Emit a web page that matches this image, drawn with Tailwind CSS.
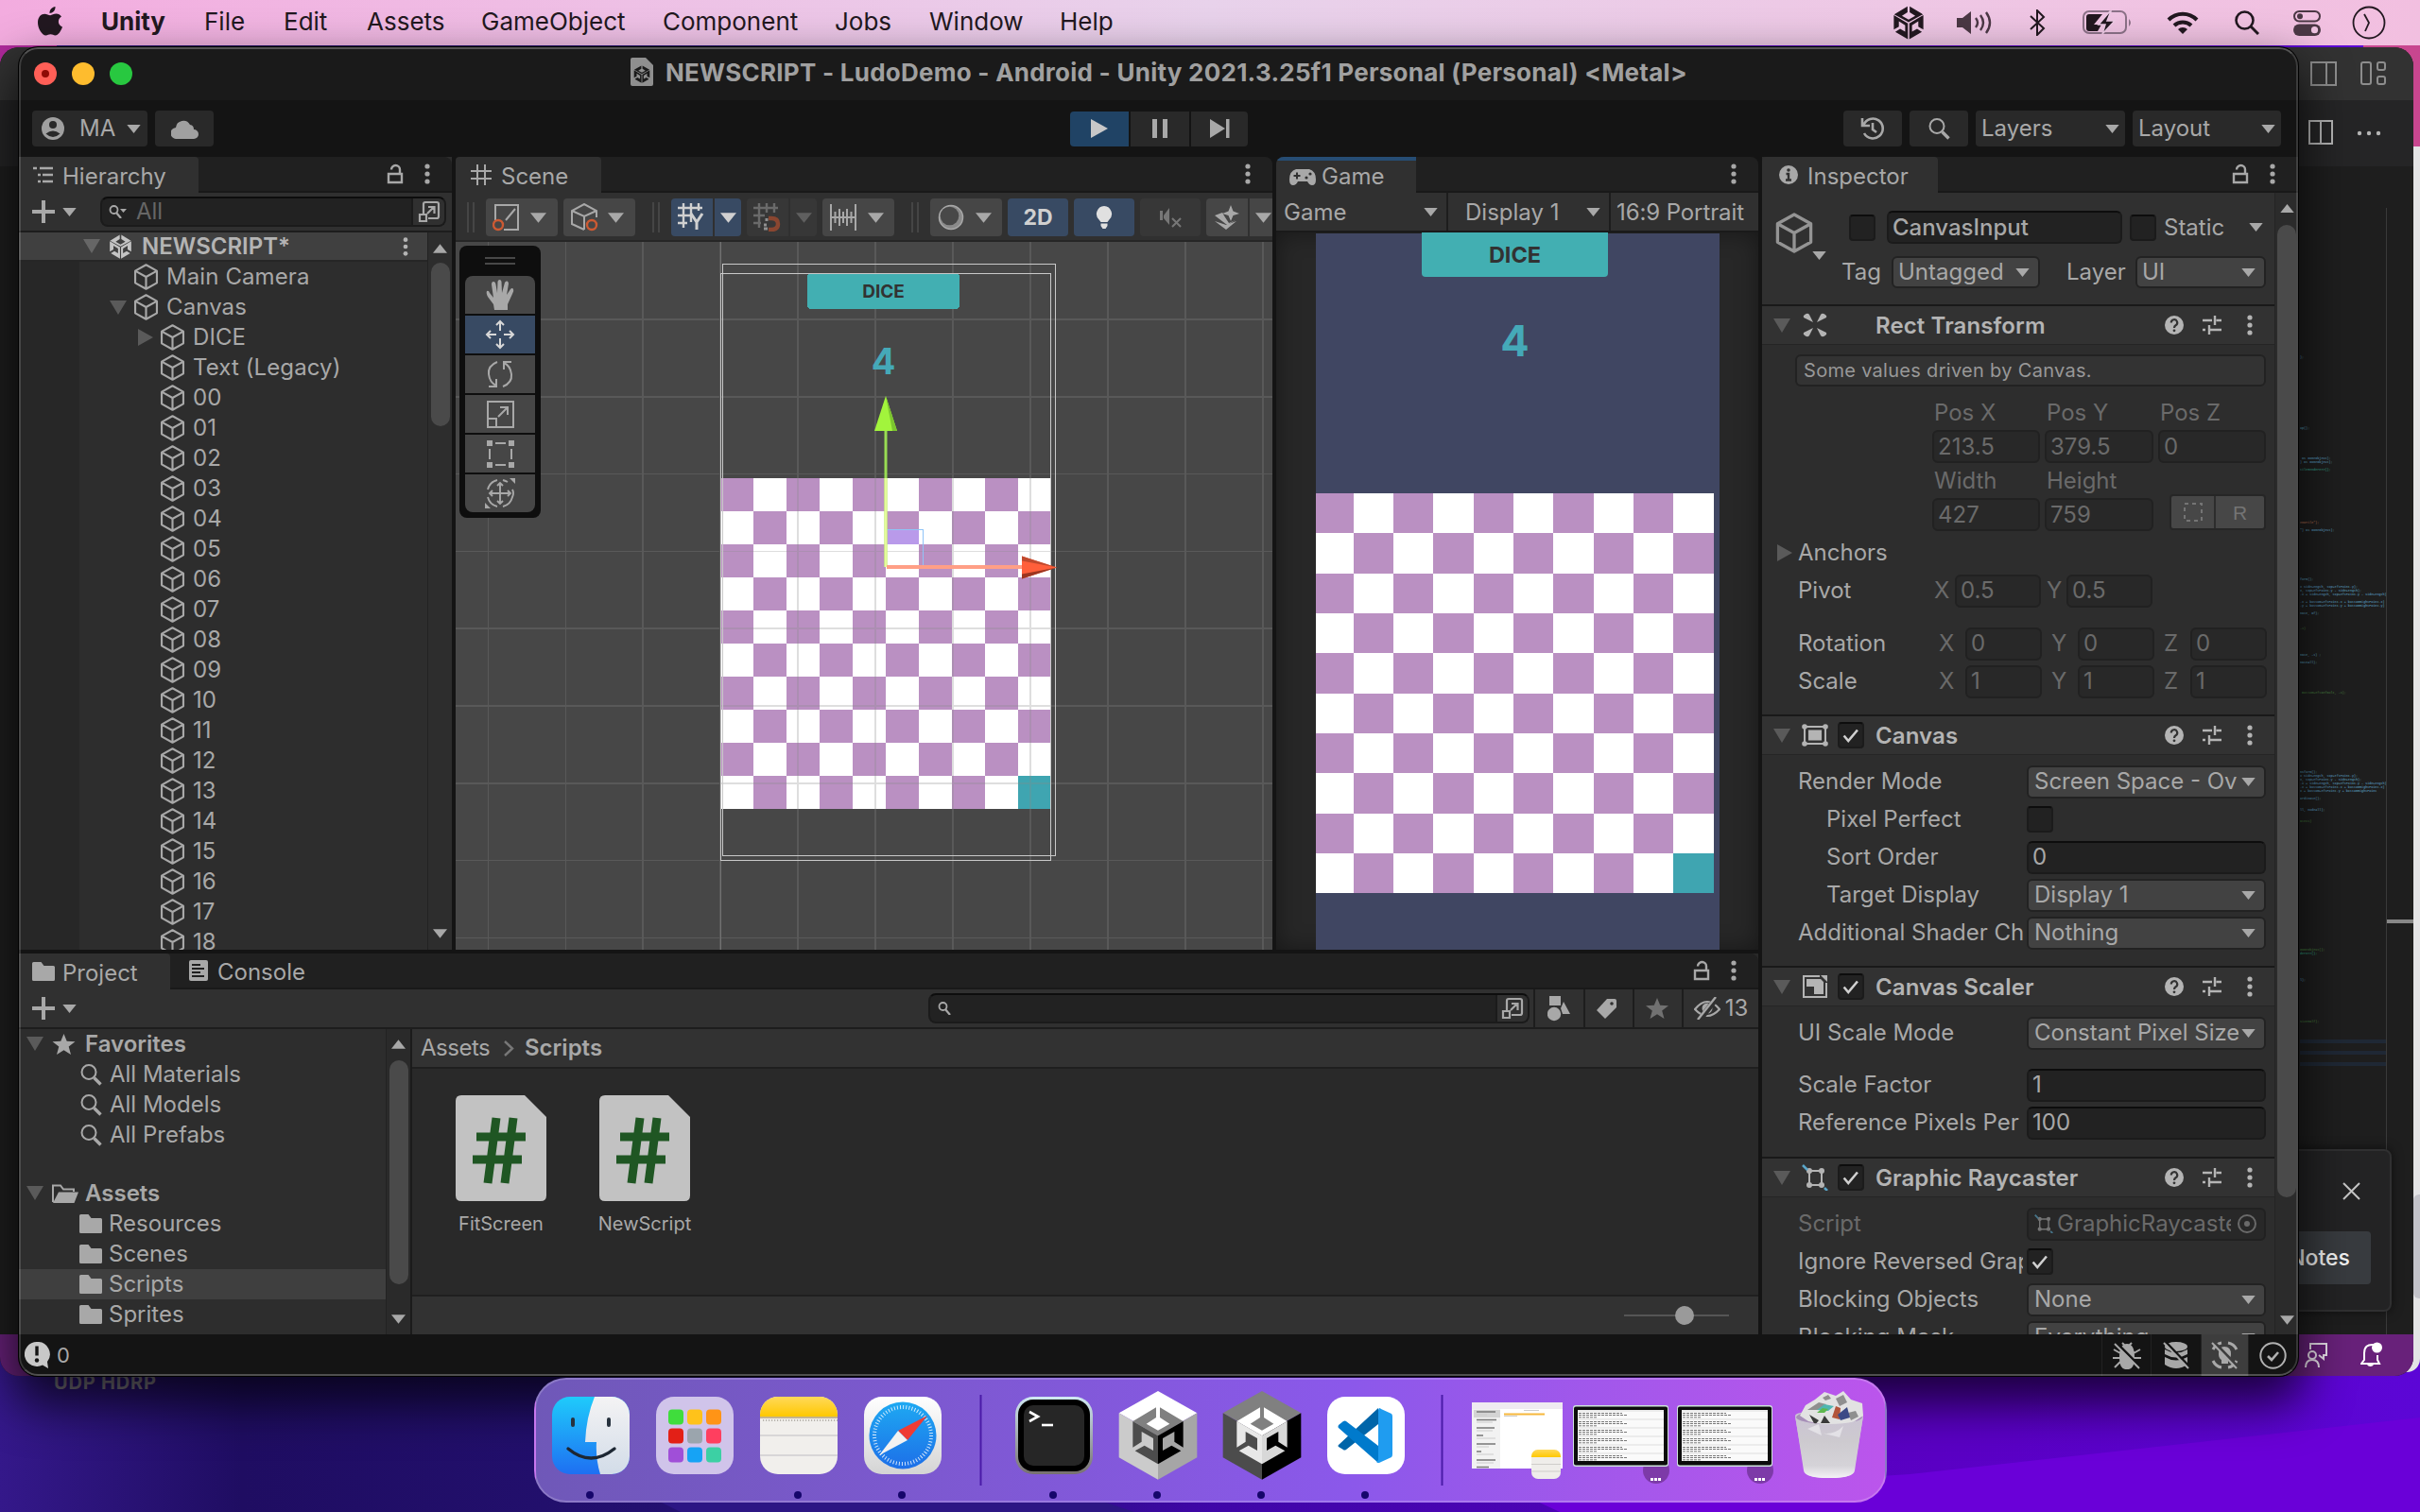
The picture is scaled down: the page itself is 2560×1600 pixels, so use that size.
<!DOCTYPE html>
<html lang="en">
<head>
<meta charset="utf-8">
<title>Unity Editor</title>
<script src="https://cdn.jsdelivr.net/npm/@tailwindcss/browser@4"></script>
</head>
<body class="w-[2560px] h-[1600px] overflow-hidden relative font-['Inter',sans-serif] text-[24px] leading-none text-[#a8a8a8] bg-[#24106b] whitespace-nowrap">

<!-- icon library -->
<svg class="hidden">
  <symbol id="cube" viewBox="2 1 20 22"><path d="M12 2l9 5v10l-9 5-9-5V7zM3 7l9 5 9-5M12 12v10" fill="none" stroke="currentColor" stroke-width="1.7" stroke-linejoin="round"/></symbol>
  <symbol id="down" viewBox="0 0 16 10"><path d="M0 0h16L8 10z" fill="currentColor"/></symbol>
  <symbol id="up" viewBox="0 0 16 10"><path d="M0 10h16L8 0z" fill="currentColor"/></symbol>
  <symbol id="fold" viewBox="0 0 18 15"><path d="M0 0h18L9 15z" fill="currentColor"/></symbol>
  <symbol id="right" viewBox="0 0 16 18"><path d="M0 0v18l16-9z" fill="currentColor"/></symbol>
  <symbol id="kebab" viewBox="0 0 6 22"><g fill="currentColor"><circle cx="3" cy="3" r="2.6"/><circle cx="3" cy="11" r="2.6"/><circle cx="3" cy="19" r="2.6"/></g></symbol>
  <symbol id="lock" viewBox="0 0 18 22"><path d="M2 11h14v9H2zM5 6.500a4.500 4.500 0 0 1 9 0V11" fill="none" stroke="currentColor" stroke-width="2.400"/></symbol>
  <symbol id="plus" viewBox="0 0 24 24"><path d="M12 0v24M0 12h24" stroke="currentColor" stroke-width="4"/></symbol>
  <symbol id="popout" viewBox="0 0 24 24"><path d="M6 14V4a2 2 0 0 1 2-2h12a2 2 0 0 1 2 2v13a2 2 0 0 1-2 2h-9M2 15h7v7H2zM10 14l7-7M11 7h6.500v7" fill="none" stroke="currentColor" stroke-width="2.200"/></symbol>
  <symbol id="search" viewBox="0 0 24 24"><path d="M10 2a7.500 7.500 0 1 1 0 15 7.500 7.500 0 0 1 0-15z" fill="none" stroke="currentColor" stroke-width="2"/><path d="M15.500 15.500l7 7" stroke="currentColor" stroke-width="3.400"/></symbol>
  <symbol id="folder" viewBox="0 0 24 20"><path d="M0 1.500Q0 0 1.500 0h8l3 4H22.500Q24 4 24 5.500v13Q24 20 22.500 20h-21Q0 20 0 18.500z" fill="currentColor"/></symbol>
  <symbol id="folderopen" viewBox="0 0 28 20"><path d="M1 19V1.500h8l3 4h11V8" fill="none" stroke="currentColor" stroke-width="2"/><path d="M1 20L7 8.500h21L23.500 20z" fill="currentColor"/></symbol>
  <symbol id="star" viewBox="0 0 24 22"><path d="M12 0l3.200 7.800 8.800.5-6.800 5.300L19.500 22 12 17.300 4.500 22l2.300-8.400L0 8.300l8.800-.5z" fill="currentColor"/></symbol>
  <symbol id="cubelogo" viewBox="-84 -92 168 188"><g fill="currentColor"><path d="M-6-88L-80-44 0 0 80-44 6-88v32l31 20L0-15-37-36-6-56z"/><path d="M-82-40L-4 6v88l-70-41 27-17 28 16V16L-54-6v30l-28 16z"/><path d="M82-40L4 6v88l70-41-27-17-28 16V16L54-6v30l28 16z"/></g></symbol>
  <symbol id="hub" viewBox="-126 -142 252 284"><path d="M0-140L124-70 0 0-124-70z" fill="var(--t)"/><path d="M-124-70L0 0v141l-124-70z" fill="var(--l)"/><path d="M124-70L0 0v141l124-70z" fill="var(--r)"/>
    <path d="M-6-88L-80-44 0 2 80-44 6-88v32l31 20L0-15-37-36-6-56z" fill="var(--it)"/><path d="M-80-44L0 2v90l-73-42 30-17 28 16V10l-37-21v32l-28 18z" fill="var(--il)"/><path d="M80-44L0 2v90l73-42-30-17-28 16V10l37-21v32l28 18z" fill="var(--ir)"/></symbol>
  <symbol id="help" viewBox="0 0 20 20"><circle cx="10" cy="10" r="10" fill="currentColor"/><path d="M6.800 7.500a3.200 3.200 0 1 1 4.800 2.700Q10 11.200 10 13" fill="none" stroke="#333" stroke-width="2.200"/><circle cx="10" cy="15.800" r="1.400" fill="#333"/></symbol>
  <symbol id="sliders" viewBox="0 0 20 20"><path d="M0 5h10M14.500 5H20M13 0v10M0 15h3M8 15h12M7 10v10" stroke="currentColor" stroke-width="2.400" fill="none"/></symbol>
  <symbol id="check" viewBox="0 0 26 26"><path d="M5 13.500l5 6L20.500 7" fill="none" stroke="#d0d0d0" stroke-width="2.800"/></symbol>
  <symbol id="rayicon" viewBox="0 0 28 28" overflow="visible"><path d="M8 7h13v15H8z" fill="none" stroke="currentColor" stroke-width="2"/><g fill="currentColor"><circle cx="8" cy="7" r="3"/><circle cx="21" cy="7" r="3"/><circle cx="8" cy="22" r="3"/><circle cx="21" cy="22" r="3"/></g><path d="M1 1l5 5M24 25l3 3" stroke="#5aa5c8" stroke-width="2.600"/></symbol>
</svg>

<!-- desktop wallpaper -->
<svg class="absolute inset-0" width="2560" height="1600" viewBox="0 0 2560 1600">
  <defs>
    <linearGradient id="wall" x1="0" x2="1"><stop offset="0" stop-color="#34188a"/><stop offset=".1" stop-color="#1f0d62"/><stop offset=".4" stop-color="#26127a"/><stop offset=".5" stop-color="#3f06a8"/><stop offset=".8" stop-color="#5a00c4"/><stop offset="1" stop-color="#5c06d6"/></linearGradient>
  </defs>
  <rect width="2560" height="1600" fill="url(#wall)"/>
  <path d="M700 1590l20 10h480l-30-10z" fill="#2c1684"/>
  <path d="M1650 1600l-30-14 400-26 540-60v100z" fill="#6a00d8"/>
  <rect width="60" height="100" fill="#b02a9c"/><rect x="2500" width="60" height="300" fill="#c8468f"/>
</svg>

<!-- white window at the back -->
<div class="absolute left-[2300px] top-[155px] w-[260px] h-[1297px] bg-[#e3e3e5] rounded-br-[14px]">
  <div class="absolute right-0 top-[1109px] w-[7px] h-[110px] bg-[#c3c3ca] rounded-l-md"></div>
</div>

<!-- menu bar -->
<header class="relative flex items-center h-12 bg-linear-to-r from-[#f3acdf] via-[#e8d2eb] to-[#f2bfe0] text-[26px] text-[#221820]">
  <svg class="ml-10 w-[26px] h-[31px] -mt-1" viewBox="0 0 26 31"><path d="M18.500 0c.3 3.800-2.600 7-6 7C12.200 3.500 15.200.3 18.500 0zM25 10.500c-4.500 2.800-4 9 1 11-1.500 4.500-4.500 9-7.500 9-2 0-2.800-1.200-5-1.200s-3.200 1.200-5 1.200C4.500 30.500 0 23 0 17 0 11 3.500 7.800 7.300 7.800c2.300 0 4 1.400 5.900 1.400 1.800 0 3.500-1.600 6.300-1.600 2.200 0 4.200 1.100 5.500 2.900z" fill="currentColor"/></svg>
  <nav class="flex ml-[41px] -mt-[2px]">
    <span class="w-[109px] font-bold">Unity</span><span class="w-[84px]">File</span><span class="w-[88px]">Edit</span><span class="w-[121px]">Assets</span><span class="w-[192px]">GameObject</span><span class="w-[182px]">Component</span><span class="w-[100px]">Jobs</span><span class="w-[138px]">Window</span><span>Help</span>
  </nav>
  <div class="ml-auto flex items-center pr-[36px]">
    <svg class="w-8 h-9" viewBox="-84 -92 168 188"><use href="#cubelogo" x="-84" y="-92" width="168" height="188"/></svg>
    <svg class="ml-[35px] w-[38px] h-[26px]" viewBox="0 0 38 26"><path d="M0 8h6l9-7v24l-9-7H0z" fill="#4b3845"/><path d="M20 8q4 5 0 10M25 5q6 8 0 16M31 2q8 11 0 22" fill="none" stroke="#4b3845" stroke-width="2.400"/></svg>
    <svg class="ml-[39px] w-[17px] h-7" viewBox="0 0 17 28"><path d="M1 7l14 13-7 7V1l7 7L1 21" fill="none" stroke="currentColor" stroke-width="2"/></svg>
    <svg class="ml-[39px] w-[52px] h-[26px]" viewBox="0 0 52 26"><rect x="1" y="1" width="45" height="23" rx="6" fill="none" stroke="#8c7288" stroke-width="2"/><path d="M49 9q4 4 0 8z" fill="#8c7288"/><path d="M7 4h14l-9 11h8l-4 7H7q-3 0-3-3V7q0-3 3-3z" fill="currentColor"/><path d="M29 1L17 15h7l-3 10 13-14h-8l4-10z" fill="currentColor" stroke="#eecbe6" stroke-width="1.500"/></svg>
    <svg class="ml-[37px] w-[34px] h-6" viewBox="0 0 34 24"><path d="M2 9a21 21 0 0 1 30 0M8 15a13 13 0 0 1 18 0" fill="none" stroke="currentColor" stroke-width="4"/><path d="M17 24l-5-5a7 7 0 0 1 10 0z" fill="currentColor"/></svg>
    <svg class="ml-[38px] w-[26px] h-[26px]" viewBox="0 0 26 26"><circle cx="10.500" cy="10.500" r="9" fill="none" stroke="currentColor" stroke-width="2.600"/><path d="M17 17l8 8" stroke="currentColor" stroke-width="3"/></svg>
    <svg class="ml-[36px] w-[29px] h-[27px]" viewBox="0 0 29 27"><rect x="1" y="1" width="27" height="10.500" rx="5.200" fill="none" stroke="#4b3845" stroke-width="2"/><circle cx="7" cy="6.200" r="3" fill="#4b3845"/><rect y="14.500" width="29" height="12.500" rx="6.200" fill="#4b3845"/><circle cx="22.500" cy="20.700" r="3.600" fill="#efc4e2"/></svg>
    <svg class="ml-[33px] w-9 h-9" viewBox="0 0 36 36"><circle cx="18" cy="18" r="16.500" fill="none" stroke="currentColor" stroke-width="1.800"/><path d="M13 9l5 9-4 9" fill="none" stroke="currentColor" stroke-width="1.800"/></svg>
  </div>
</header>

<p class="absolute left-[57px] top-[1453px] text-[20px] font-bold text-[#8a8490] tracking-[0.8px]">UDP HDRP</p>

<!-- code editor window -->
<section class="absolute left-0 top-[50px] w-[2553px] h-[1406px] rounded-[20px] overflow-hidden bg-[#1e1e1e] flex flex-col text-[#c5c5c5]">
  <div class="h-14 bg-[#323232] flex items-center justify-end pr-[28px] gap-[24px] text-[#8d8d8d]">
    <svg class="w-[30px] h-[28px]" viewBox="0 0 30 28"><path d="M2 2h26v24H2zM18 2v24" fill="none" stroke="currentColor" stroke-width="2"/></svg>
    <svg class="w-[28px] h-[26px]" viewBox="0 0 28 26"><g fill="none" stroke="currentColor" stroke-width="2"><rect x="1" y="1" width="10" height="23" rx="2"/><rect x="18" y="1" width="8" height="8" rx="2"/><rect x="18" y="16" width="8" height="8" rx="2"/></g></svg>
  </div>
  <div class="h-[70px] bg-[#252526] flex items-center justify-end pr-[34px] gap-[25px] text-[#b5b5b5]">
    <svg class="w-[26px] h-[28px] -mt-[2px]" viewBox="0 0 26 28"><path d="M1 2h24v24H1zM13 2v24" fill="none" stroke="currentColor" stroke-width="2"/></svg>
    <svg class="w-[26px] h-[6px]" viewBox="0 0 26 6"><g fill="currentColor"><circle cx="3" cy="3" r="2.200"/><circle cx="13" cy="3" r="2.200"/><circle cx="23" cy="3" r="2.200"/></g></svg>
  </div>
  <div class="flex-1 relative flex justify-end">
    <div id="minimap" class="relative w-[91px] overflow-hidden font-['Liberation_Mono',monospace] text-[3.4px] leading-[4px]"></div>
    <div class="w-[29px] mt-11 border-l border-[#3a3a3a]"><div class="mt-[753px] h-1 bg-[#878787]"></div></div>
    <div class="absolute right-[23px] top-[1040px] w-[200px] h-[172px] rounded-lg border-2 border-[#303031] bg-[#232324] shadow-[0_0_12px_#0008] flex flex-col items-end">
      <svg class="w-[19px] h-[19px] mr-[31px] mt-[33px]" viewBox="0 0 19 19"><path d="M1 1l17 17M18 1L1 18" stroke="#c5c5c5" stroke-width="2"/></svg>
      <div class="w-[170px] h-14 mt-[33px] mr-5 rounded bg-[#383b3f] text-[#f2f2f2] font-medium text-[23px] flex items-center justify-end pr-[22px]">Notes</div>
    </div>
  </div>
  <div class="h-11 bg-[#68217a] flex items-center justify-end pr-[32px] gap-[34px] text-[#e8e0ea]">
    <svg class="w-[26px] h-[28px]" viewBox="0 0 26 28"><path d="M7 8V2h17v12h-3v4l-5-4M2 27q0-8 7-8t7 8" fill="none" stroke="currentColor" stroke-width="2"/><circle cx="9" cy="14" r="4" fill="none" stroke="currentColor" stroke-width="2"/></svg>
    <svg class="w-[24px] h-[28px]" viewBox="0 0 24 28"><path d="M14 3Q4 2 4 12v7l-3 4h19l-2-4v-5" fill="none" stroke="#fff" stroke-width="2"/><circle cx="17.500" cy="6" r="5.500" fill="#fff"/><path d="M7 24a4 4 0 0 0 7 0z" fill="#fff"/></svg>
  </div>
</section>

<!-- editor window -->
<main class="absolute left-[20px] top-[50px] w-[2411px] h-[1406px] rounded-[20px] overflow-hidden bg-[#141414] flex flex-col shadow-[0_24px_50px_6px_#000000b0,0_0_0_1px_#000]">
  <div class="absolute inset-0 rounded-[20px] border-2 border-white/25 border-x-white/15 z-50 pointer-events-none"></div>

  <!-- title bar -->
  <div class="h-14 bg-[#1a1a1a] flex items-center shrink-0">
    <div class="flex gap-4 ml-4">
      <div class="size-6 rounded-full bg-[#ff5f57] flex items-center justify-center"><div class="size-2 rounded-full bg-[#8e0b06]"></div></div>
      <div class="size-6 rounded-full bg-[#febc2e]"></div>
      <div class="size-6 rounded-full bg-[#28c840]"></div>
    </div>
    <svg class="ml-[527px] -mt-1 w-[24px] h-[30px]" viewBox="0 0 24 30"><path d="M2 0h14l8 8v20q0 2-2 2H2q-2 0-2-2V2Q0 0 2 0z" fill="#8f8f8f"/><use href="#cubelogo" x="3" y="8" width="18" height="19" color="#1a1a1a"/></svg>
    <span class="ml-[13px] -mt-[2px] text-[26px] font-bold text-[#a0a0a0] tracking-[0.25px]">NEWSCRIPT - LudoDemo - Android - Unity 2021.3.25f1 Personal (Personal) &lt;Metal&gt;</span>
  </div>

  <!-- main toolbar -->
  <div class="h-[60px] shrink-0 flex items-center">
    <div class="ml-[14px] w-[122px] h-[38px] rounded bg-[#292929] flex items-center pl-[10px]">
      <svg class="size-6" viewBox="0 0 24 24"><circle cx="12" cy="12" r="12" fill="#a0a0a0"/><circle cx="12" cy="8" r="4" fill="#292929"/><path d="M4.500 17.500q7.500-6 15 0-7.500 7-15 0z" fill="#292929"/></svg>
      <span class="ml-[16px] w-[50px]">MA</span><svg class="w-[15px] h-[9px]"><use href="#down"/></svg>
    </div>
    <div class="ml-2 w-[62px] h-[38px] rounded bg-[#292929] flex items-center justify-center"><svg class="w-[29px] h-[21px]" viewBox="0 0 29 21"><path d="M6 21a6 6 0 0 1-1-12A8 8 0 0 1 20 6a5 5 0 0 1 4 5 5 5 0 0 1 0 10z" fill="#a0a0a0"/></svg></div>
    <div class="ml-[906px] flex gap-[2px] h-[37px] text-[#a8a8a8]">
      <div class="w-[62px] rounded-l bg-[#204365] flex items-center justify-center"><svg class="w-[18px] h-[20px]" viewBox="0 0 18 20"><path d="M0 0l18 10L0 20z" fill="#c8c8c8"/></svg></div>
      <div class="w-[62px] bg-[#292929] flex items-center justify-center"><svg class="w-[18px] h-[20px]" viewBox="0 0 18 20"><path d="M1 0h5v20H1zM12 0h5v20h-5z" fill="currentColor"/></svg></div>
      <div class="w-[60px] rounded-r bg-[#292929] flex items-center justify-center"><svg class="w-[21px] h-[20px]" viewBox="0 0 21 20"><path d="M0 0l16 10L0 20zM17 0h3.500v20H17z" fill="currentColor"/></svg></div>
    </div>
    <div class="ml-auto mr-[18px] flex gap-2 h-[38px]">
      <div class="w-[62px] rounded bg-[#292929] flex items-center justify-center"><svg class="size-[26px]" viewBox="0 0 26 26"><path d="M3.500 9A10.500 10.500 0 1 1 4 18M2 2v8h8M13 7v7l4 3" fill="none" stroke="currentColor" stroke-width="2.600"/></svg></div>
      <div class="w-[62px] rounded bg-[#292929] flex items-center justify-center"><svg class="size-6"><use href="#search"/></svg></div>
      <div class="w-[158px] rounded bg-[#292929] flex items-center justify-between px-[6px]"><span>Layers</span><svg class="w-[15px] h-[9px]"><use href="#down"/></svg></div>
      <div class="w-[157px] rounded bg-[#292929] flex items-center justify-between px-[6px]"><span>Layout</span><svg class="w-[15px] h-[9px]"><use href="#down"/></svg></div>
    </div>
  </div>

  <div class="flex h-[1246px] shrink-0 gap-1">
    <div class="w-[1840px] flex flex-col gap-1">
      <div class="h-[839px] flex gap-1">

        <!-- hierarchy -->
        <section class="w-[458px] flex flex-col bg-[#2d2d2d] overflow-hidden">
          <div class="h-[38px] shrink-0 flex items-stretch bg-[#202020] rounded-tr-lg">
            <div class="w-[190px] bg-[#303030] rounded-tr flex items-center pl-[15px]">
              <svg class="w-[22px] h-[18px]" viewBox="0 0 22 18"><path d="M0 2h4M7 2h14M5 9h3M10 9h11M5 16h3M10 16h11" stroke="currentColor" stroke-width="2.400"/></svg><span class="ml-[9px] mt-[3px]">Hierarchy</span>
            </div>
            <div class="flex-1 flex items-center justify-end border-b-2 border-[#191919] pr-[23px] gap-[22px]"><svg class="w-[18px] h-[22px]"><use href="#lock"/></svg><svg class="w-[6px] h-[22px]"><use href="#kebab"/></svg></div>
          </div>
          <div class="h-[42px] shrink-0 bg-[#303030] border-b-2 border-[#1d1d1d] flex items-center pl-[14px]">
            <svg class="size-6"><use href="#plus"/></svg><svg class="ml-2 w-[15px] h-[9px]"><use href="#down"/></svg>
            <div class="ml-[25px] w-[366px] h-8 rounded-lg bg-[#222] border-2 border-[#1b1b1b] border-t-[#0d0d0d] flex items-center overflow-hidden">
              <svg class="ml-[7px] w-5 h-[14px]" viewBox="0 0 20 14"><circle cx="5.500" cy="5" r="4" fill="none" stroke="currentColor" stroke-width="1.800"/><path d="M8 8l5 6" stroke="currentColor" stroke-width="2.200"/><path d="M12 4h7l-3.500 4z" fill="currentColor"/></svg>
              <span class="ml-[9px] text-[#666]">All</span>
              <div class="ml-auto w-[35px] self-stretch bg-[#303030] border-l-2 border-[#1b1b1b] flex items-center justify-center"><svg class="size-6"><use href="#popout"/></svg></div>
            </div>
          </div>
          <div class="flex-1 flex min-h-0">
            <div class="w-[432px] relative flex flex-col overflow-hidden">
              <div class="absolute left-0 top-0 bottom-0 w-16 bg-[#272727]"></div>
              <div class="relative h-[31px] shrink-0 bg-[#404040] border-b-2 border-[#262626] flex items-center pl-[68px] font-semibold text-[#b4b4b4]">
                <svg class="w-[18px] h-[15px] text-[#666]"><use href="#fold"/></svg><svg class="ml-[9px] w-[25px] h-[26px] text-[#c4c4c4]"><use href="#cubelogo"/></svg><span class="ml-[10px]">NEWSCRIPT*</span>
                <svg class="ml-auto mr-[20px] w-[6px] h-5"><use href="#kebab"/></svg>
              </div>
              <div id="tree" class="relative flex flex-col"></div>
            </div>
            <div class="flex-1 border-l border-[#222] flex flex-col items-center pt-3 pb-3">
              <svg class="w-[15px] h-[10px] shrink-0"><use href="#up"/></svg><div class="mt-[10px] w-5 h-[173px] rounded-full bg-[#4a4a4a]"></div>
              <svg class="mt-auto w-[15px] h-[10px] shrink-0"><use href="#down"/></svg>
            </div>
          </div>
        </section>

        <!-- scene -->
        <section class="w-[864px] flex flex-col overflow-hidden">
          <div class="h-[38px] shrink-0 flex items-stretch bg-[#202020] rounded-t-lg">
            <div class="w-[154px] bg-[#303030] rounded-t flex items-center pl-4">
              <svg class="w-[22px] h-[22px]" viewBox="0 0 22 22"><path d="M7 0v22M15 0v22M0 7h22M0 15h22" stroke="currentColor" stroke-width="2"/></svg><span class="ml-[10px] mt-[3px]">Scene</span>
            </div>
            <div class="flex-1 flex items-center justify-end border-b-2 border-[#191919] pr-[23px]"><svg class="w-[6px] h-[22px]"><use href="#kebab"/></svg></div>
          </div>
          <div class="h-[52px] pt-[2px] shrink-0 bg-[#303030] border-b-2 border-[#262626] flex items-center overflow-hidden *:shrink-0 *:h-10">
            <div class="ml-3 w-2 h-8! border-x-2 border-[#454545]"></div>
            <div class="ml-3 w-[76px] rounded bg-[#464646] flex items-center pl-[7px]"><svg class="w-8 h-[30px]" viewBox="0 0 32 30"><path d="M3 18V2h24v26H12M14 18L24 6" fill="none" stroke="currentColor" stroke-width="2"/><circle cx="6" cy="23" r="5" fill="none" stroke="#cc5a33" stroke-width="2.400"/></svg><svg class="ml-2 w-[17px] h-[11px]"><use href="#down"/></svg></div>
            <div class="ml-[6px] w-[76px] rounded bg-[#464646] flex items-center pl-[7px]"><svg class="w-8 h-[30px]" viewBox="0 0 32 30"><path d="M15 28L2 22V8l13-7 13 7v7M2 8l13 6 13-6M15 14v14" fill="none" stroke="currentColor" stroke-width="2"/><circle cx="23" cy="23" r="5" fill="none" stroke="#cc5a33" stroke-width="2.400"/></svg><svg class="ml-2 w-[17px] h-[11px]"><use href="#down"/></svg></div>
            <div class="ml-[18px] w-2 h-8! border-x-2 border-[#454545]"></div>
            <div class="ml-3 w-11 rounded-l bg-[#384a63] text-[#d0d0d0] flex items-center justify-center"><svg class="w-[30px] h-[30px]" viewBox="0 0 30 30"><path d="M6 0v26M14 0v12M22 0v8M0 5h26M0 13h14M0 21h10M14 12v8" stroke="currentColor" stroke-width="2.400"/><path d="M14 11l6 9 6-9M20 19v9" fill="none" stroke="currentColor" stroke-width="3"/></svg></div>
            <div class="ml-[2px] w-7 rounded-r bg-[#384a63] text-[#d0d0d0] flex items-center justify-center"><svg class="w-[17px] h-[11px]"><use href="#down"/></svg></div>
            <div class="ml-[6px] w-11 rounded-l bg-[#373737] text-[#6a6a6a] flex items-center justify-center"><svg class="w-[30px] h-[30px]" viewBox="0 0 30 30"><path d="M6 0v26M14 0v10M22 0v10M0 5h26M0 13h12M0 21h8" stroke="currentColor" stroke-width="2.400"/><path d="M14 16v3M14 23h-3M11 27h4" stroke="#909090" stroke-width="3"/><path d="M16 16h3q7 0 7 6t-7 6h-3" fill="none" stroke="#8a4630" stroke-width="4.500"/></svg></div>
            <div class="ml-[2px] w-7 rounded-r bg-[#373737] text-[#5f5f5f] flex items-center justify-center"><svg class="w-[17px] h-[11px]"><use href="#down"/></svg></div>
            <div class="ml-[6px] w-[76px] rounded bg-[#464646] flex items-center pl-2"><svg class="w-7 h-[28px]" viewBox="0 0 28 28"><path d="M1 0v28M27 0v28M1 14h26M5.500 8v12M10 5v18M14 8v12M18 5v18M22.500 8v12" stroke="currentColor" stroke-width="2"/></svg><svg class="ml-[12px] w-[17px] h-[11px]"><use href="#down"/></svg></div>
            <div class="ml-[18px] w-2 h-8! border-x-2 border-[#454545]"></div>
            <div class="ml-3 w-[76px] rounded bg-[#464646] flex items-center pl-2"><svg class="w-7 h-[28px]" viewBox="0 0 28 28"><circle cx="14" cy="14" r="12.500" fill="#8a8a8a" stroke="currentColor" stroke-width="1.500"/><circle cx="12.500" cy="12.500" r="9.800" fill="#484848"/></svg><svg class="ml-[12px] w-[17px] h-[11px]"><use href="#down"/></svg></div>
            <div class="ml-[6px] w-16 rounded bg-[#384a63] text-[#d0d0d0] font-bold text-[23px] flex items-center justify-center">2D</div>
            <div class="ml-[6px] w-16 rounded bg-[#384a63] flex items-center justify-center"><svg class="w-[18px] h-[24px]" viewBox="0 0 18 24"><path d="M9 0a8.500 8.500 0 0 1 5 15l-1.500 2h-7L4 15A8.500 8.500 0 0 1 9 0zM5.500 18.500h7V21L10.500 24h-3l-2-3z" fill="#e0e0e0"/></svg></div>
            <div class="ml-[6px] w-16 rounded bg-[#373737] text-[#777] flex items-center justify-center"><svg class="w-6 h-6" viewBox="0 0 24 24"><path d="M1 5h3v10H1zM5 10l6-8v18l-6-7z" fill="currentColor"/><path d="M14 13l9 9M23 13l-9 9" stroke="currentColor" stroke-width="2"/></svg></div>
            <div class="ml-[6px] w-11 rounded-l bg-[#464646] flex items-center justify-center"><svg class="w-[26px] h-[26px]" viewBox="0 0 26 26"><path d="M17 0l2.500 6.500L26 9l-6.500 2L17 17l-2.500-6L8 9l6.500-2.500zM0 11l8-3 3 5 4 6 7-3-9 5zM0 17l12 4 11-4-11 9z" fill="currentColor"/></svg></div>
            <div class="ml-[2px] w-7 bg-[#464646] flex items-center pl-[6px]"><svg class="w-[17px] h-[11px] shrink-0"><use href="#down"/></svg></div>
          </div>
          <div class="relative flex-1 bg-[#474747]">
            <svg class="absolute inset-0" width="864" height="749" viewBox="482 256 864 749" shape-rendering="crispEdges">
              <g id="board"></g>
              <path id="gridlines" fill="none" stroke="#888" stroke-opacity=".28" stroke-width="1.500"/>
              <path d="M762.500 256V1005" stroke="#999" stroke-opacity=".4"/>
              <rect x="854" y="289" width="161" height="38" rx="4" fill="#42afb2"/>
              <rect x="764" y="279.500" width="352.500" height="626" fill="none" stroke="#c9c9c9" stroke-width="1"/>
              <rect x="762.500" y="289.500" width="349" height="621" fill="none" stroke="#c9c9c9" stroke-width="1"/>
              <rect x="938" y="560" width="34" height="16" fill="#b99aea"/>
              <path d="M938 560.500h38.500V598" fill="none" stroke="#8fc4f7" stroke-width="1.200"/>
              <g shape-rendering="auto">
                <path d="M937 456v144" stroke="#98dc53" stroke-width="3"/><path d="M937 506v94" stroke="#e4fb9a" stroke-width="3"/>
                <path d="M938 600h146" stroke="#ff9f86" stroke-width="4"/>
                <path d="M937 419l12 37h-24z" fill="#a2f43c"/><path d="M937 419l12 37h-5z" fill="#7cc52f"/>
                <path d="M1118 600.500l-37-12v24z" fill="#ff5f3a"/><path d="M1118 600.500l-37 12v-5z" fill="#9c3620"/><path d="M1118 600.500l-37-12v5z" fill="#c04a2e"/>
              </g>
            </svg>
            <div class="absolute left-[372px] top-[33px] w-[161px] h-[38px] flex items-center justify-center text-[19px] font-bold text-[#323232]">DICE</div>
            <div class="absolute left-[372px] top-[107px] w-[161px] text-center text-[38px] font-bold text-[#45a9b8]">4</div>
            <!-- tool palette -->
            <div class="absolute left-[4px] top-[4px] w-[86px] h-[288px] rounded-lg bg-[#0e0e0e] flex flex-col items-center gap-[2px] text-[#a8a8a8]">
              <div class="h-[30px] shrink-0 flex flex-col gap-[4px] pt-3"><div class="w-8 h-[2px] bg-[#484848]"></div><div class="w-8 h-[2px] bg-[#484848]"></div></div>
              <div class="w-[74px] h-10 rounded-t-lg bg-[#464646] flex items-center justify-center"><svg class="w-[30px] h-[32px]" viewBox="0 0 30 32"><path d="M9 32L8 26 2 18Q0 14 1 12q2-1 3 2l4 5L6 5q0-3 2-3t2.500 3L12 14l.5-12Q13 0 14.500 0T16.500 2L17 14 20 3q1-2 2.500-1.500T24 4l-2 12 4-6q2-2 3 0t-1 5l-5 11v6z" fill="currentColor"/></svg></div>
              <div class="w-[74px] h-10 bg-[#384a63] text-[#d8d8d8] flex items-center justify-center"><svg class="w-8 h-8" viewBox="0 0 32 32"><path d="M16 2v10M16 20v10M2 16h10M20 16h10M12 6l4-4 4 4M12 26l4 4 4-4M6 12l-4 4 4 4M26 12l4 4-4 4" fill="none" stroke="currentColor" stroke-width="2"/></svg></div>
              <div class="w-[74px] h-10 bg-[#464646] flex items-center justify-center"><svg class="w-[30px] h-[30px]" viewBox="0 0 30 30"><path d="M12 2Q2 6 3 15t8 12M3 28h8v-8M18 28q10-4 9-13T19 3M27 2h-8v8" fill="none" stroke="currentColor" stroke-width="2"/></svg></div>
              <div class="w-[74px] h-10 bg-[#464646] flex items-center justify-center"><svg class="w-[29px] h-[29px]" viewBox="0 0 29 29"><path d="M1 1h27v27H1zM1 19h9v9M12 17L22 7M14 7h8v8" fill="none" stroke="currentColor" stroke-width="2"/></svg></div>
              <div class="w-[74px] h-10 bg-[#464646] flex items-center justify-center"><svg class="w-[29px] h-[29px]" viewBox="0 0 29 29"><path d="M0 0h6v6H0zM23 0h6v6h-6zM0 23h6v6H0zM23 23h6v6h-6z" fill="currentColor"/><path d="M3 9v11M26 9v11M9 3h11M9 26h11" stroke="currentColor" stroke-width="2"/></svg></div>
              <div class="w-[74px] h-10 rounded-b-lg bg-[#464646] flex items-center justify-center"><svg class="w-[32px] h-[32px]" viewBox="0 0 32 32"><path d="M16 5v22M5 16h22M13 8l3-3 3 3M13 24l3 3 3-3M8 13l-3 3 3 3M24 13l3 3-3 3M3 12Q5 4 13 2M19 2q3 1 5 2M29 12q2 4 0 8Q27 28 19 30M13 30q-8-2-10-10" fill="none" stroke="currentColor" stroke-width="1.900"/><path d="M26 0h6v6zM0 26v6h6z" fill="currentColor"/></svg></div>
            </div>
          </div>
        </section>

        <!-- game -->
        <section class="w-[510px] flex flex-col overflow-hidden">
          <div class="h-[38px] shrink-0 flex items-stretch bg-[#202020] rounded-t-lg overflow-hidden">
            <div class="w-[148px] bg-[#303030] border-t-4 border-[#264d74] flex items-center pl-[14px]">
              <svg class="w-7 h-[17px]" viewBox="0 0 28 17"><path d="M7 0h14q7 2 7 11 0 6-4 6-3 0-5-4H9q-2 4-5 4-4 0-4-6Q0 2 7 0z" fill="currentColor"/><path d="M8 3.500v7M4.500 7h7" stroke="#303030" stroke-width="2"/><circle cx="18" cy="9" r="1.600" fill="#303030"/><circle cx="22" cy="5" r="1.600" fill="#303030"/></svg><span class="ml-[6px]">Game</span>
            </div>
            <div class="flex-1 flex items-center justify-end border-b-2 border-[#191919] pr-[23px]"><svg class="w-[6px] h-[22px]"><use href="#kebab"/></svg></div>
          </div>
          <div class="h-[42px] shrink-0 bg-[#303030] border-b-2 border-[#1a1a1a] flex items-stretch *:flex *:items-center">
            <div class="w-[182px] pl-2 pr-[9px] justify-between border-r-2 border-[#1d1d1d]"><span class="mt-px">Game</span><svg class="w-[15px] h-[9px]"><use href="#down"/></svg></div>
            <div class="w-[172px] pl-[18px] pr-[9px] justify-between border-r-2 border-[#1d1d1d]"><span class="mt-px">Display 1</span><svg class="w-[15px] h-[9px]"><use href="#down"/></svg></div>
            <div class="pl-[6px] pt-px tracking-[-0.1px]">16:9 Portrait</div>
          </div>
          <div class="flex-1 relative bg-[#272727]">
            <div class="absolute inset-0 shadow-[inset_0_0_24px_#0006]"></div>
            <svg class="absolute inset-0" width="510" height="759" viewBox="1350 246 510 759"><rect x="1392" y="247" width="427" height="758" fill="#404662"/><rect x="1504" y="242" width="197" height="51" rx="4" fill="#42afb2"/><g id="gboard" shape-rendering="crispEdges"></g></svg>
            <div class="absolute left-[154px] top-0 w-[197px] h-[47px] flex items-center justify-center text-[23.5px] font-bold text-[#323232]">DICE</div>
            <div class="absolute left-[154px] top-[92px] w-[197px] text-center text-[45px] font-bold text-[#45a9b8]">4</div>
          </div>
        </section>
      </div>

      <!-- project -->
      <section class="h-[403px] flex flex-col bg-[#292929]">
        <div class="h-[38px] shrink-0 flex items-stretch bg-[#202020] rounded-tr-lg">
          <div class="w-[160px] bg-[#303030] rounded-tr flex items-center pl-[14px]"><svg class="w-6 h-5"><use href="#folder"/></svg><span class="ml-2 mt-[3px]">Project</span></div>
          <div class="flex-1 flex items-center border-b-2 border-[#191919] pl-5 pr-[23px]">
            <svg class="w-5 h-[22px]" viewBox="0 0 20 22"><rect width="20" height="22" rx="2" fill="currentColor"/><path d="M3 5h9M3 9h13M3 13h9M3 17h13" stroke="#202020" stroke-width="2"/></svg><span class="ml-[10px] mt-[4px]">Console</span>
            <svg class="ml-auto mr-[22px] w-[18px] h-[22px]"><use href="#lock"/></svg><svg class="w-[6px] h-[22px]"><use href="#kebab"/></svg>
          </div>
        </div>
        <div class="h-[42px] shrink-0 bg-[#303030] border-b-2 border-[#1d1d1d] flex items-center pl-[14px]">
          <svg class="size-6"><use href="#plus"/></svg><svg class="ml-2 w-[15px] h-[9px]"><use href="#down"/></svg>
          <div class="ml-auto w-[636px] h-8 rounded-lg bg-[#222] border-2 border-[#1b1b1b] border-t-[#0d0d0d] flex items-center overflow-hidden">
            <svg class="ml-2 w-[14px] h-[14px]" viewBox="0 0 14 14"><circle cx="5.500" cy="5" r="4" fill="none" stroke="currentColor" stroke-width="1.800"/><path d="M8 8l5 6" stroke="currentColor" stroke-width="2.200"/></svg>
            <div class="ml-auto w-[34px] self-stretch bg-[#303030] border-l-2 border-[#1b1b1b] flex items-center justify-center"><svg class="size-6"><use href="#popout"/></svg></div>
          </div>
          <div class="ml-1 flex self-stretch *:flex *:items-center *:justify-center *:border-l-2 *:border-[#1d1d1d]">
            <div class="w-[53px] pr-[2px]"><svg class="w-6 h-[27px]" viewBox="0 0 24 27"><path d="M2 0h12v10H2zM17 6l7 13h-8l-2-6z" fill="currentColor"/><circle cx="7" cy="19" r="7.200" fill="currentColor"/></svg></div>
            <div class="w-[52px] pr-[6px]"><svg class="w-[21px] h-[21px]" viewBox="0 0 21 21"><path d="M11 0h8q2 0 2 2v7L9 21 0 12z" fill="currentColor"/><circle cx="16" cy="5" r="1.800" fill="#303030"/></svg></div>
            <div class="w-[52px] pr-[2px] text-[#717171]"><svg class="w-6 h-[22px]"><use href="#star"/></svg></div>
            <div class="w-[81px]"><svg class="w-7 h-6" viewBox="0 0 28 24"><path d="M1 13Q14-3 27 13 14 27 1 13z" fill="none" stroke="currentColor" stroke-width="2.200"/><circle cx="14" cy="12" r="5.500" fill="currentColor"/><path d="M7 23L24 1" stroke="#303030" stroke-width="6"/><path d="M4 24L23 0" stroke="currentColor" stroke-width="2.400"/></svg><span class="ml-[5px]">13</span></div>
          </div>
        </div>
        <div class="flex-1 flex">
          <div class="w-[388px] bg-[#2d2d2d] flex flex-col *:h-8 *:flex *:items-center *:shrink-0 *:pb-px">
            <div class="pl-2 font-semibold"><svg class="w-[18px] h-[15px] text-[#5a5a5a]"><use href="#fold"/></svg><svg class="ml-[9px] w-[25px] h-[22px]"><use href="#star"/></svg><span class="ml-[10px]">Favorites</span></div>
            <div class="pl-16"><svg class="size-6"><use href="#search"/></svg><span class="ml-[8px]">All Materials</span></div>
            <div class="pl-16"><svg class="size-6"><use href="#search"/></svg><span class="ml-[8px]">All Models</span></div>
            <div class="pl-16"><svg class="size-6"><use href="#search"/></svg><span class="ml-[8px]">All Prefabs</span></div>
            <div class="mt-[30px] pl-2 font-semibold"><svg class="w-[18px] h-[15px] text-[#5a5a5a]"><use href="#fold"/></svg><svg class="ml-[9px] w-7 h-5"><use href="#folderopen"/></svg><span class="ml-[7px]">Assets</span></div>
            <div class="pl-16"><svg class="w-6 h-5"><use href="#folder"/></svg><span class="ml-[7px]">Resources</span></div>
            <div class="pl-16"><svg class="w-6 h-5"><use href="#folder"/></svg><span class="ml-[7px]">Scenes</span></div>
            <div class="pl-16 bg-[#3f3f3f]"><svg class="w-6 h-5"><use href="#folder"/></svg><span class="ml-[7px]">Scripts</span></div>
            <div class="pl-16"><svg class="w-6 h-5"><use href="#folder"/></svg><span class="ml-[7px]">Sprites</span></div>
          </div>
          <div class="w-[28px] bg-[#2a2a2a] border-l border-r-2 border-l-[#222] border-r-[#1b1b1b] flex flex-col items-center pt-[11px] pb-[11px]">
            <svg class="w-[15px] h-[10px] shrink-0"><use href="#up"/></svg><div class="mt-3 w-5 h-[237px] rounded-full bg-[#4a4a4a]"></div><svg class="mt-auto w-[15px] h-[10px] shrink-0"><use href="#down"/></svg>
          </div>
          <div class="flex-1 flex flex-col">
            <div class="h-[42px] bg-[#323232] border-b-2 border-[#1f1f1f] flex items-center pl-[9px]"><span class="w-[73px] tracking-[-0.5px]">Assets</span><svg class="ml-[15px] w-[11px] h-[17px]" viewBox="0 0 11 17"><path d="M1 1l8 7.500L1 16" fill="none" stroke="#777" stroke-width="2.400"/></svg><span class="ml-[11px] font-semibold">Scripts</span></div>
            <div class="flex-1 flex pl-[18px] pt-7 text-[20px]" id="files"></div>
            <div class="h-[42px] bg-[#323232] border-t-2 border-[#1f1f1f] flex items-center justify-end pr-[31px]">
              <div class="w-[111px] h-[2px] bg-[#555] flex items-center"><div class="ml-[54px] size-5 rounded-full bg-[#9a9a9a]"></div></div>
            </div>
          </div>
        </div>
      </section>
    </div>

    <!-- inspector -->
    <section class="flex-1 flex flex-col overflow-hidden bg-[#2d2d2d]">
      <div class="h-[38px] shrink-0 flex items-stretch bg-[#202020] rounded-tl-lg">
        <div class="w-[186px] bg-[#303030] rounded-t flex items-center pl-[18px]"><svg class="size-5" viewBox="0 0 20 20"><circle cx="10" cy="10" r="10" fill="currentColor"/><circle cx="10" cy="5" r="1.800" fill="#303030"/><path d="M7.500 9H10v6M7 15.500h6" stroke="#303030" stroke-width="2.400" fill="none"/></svg><span class="ml-[10px] mt-[3px]">Inspector</span></div>
        <div class="flex-1 flex items-center justify-end border-b-2 border-[#191919] pr-[24px] gap-[22px]"><svg class="w-[18px] h-[22px]"><use href="#lock"/></svg><svg class="w-[6px] h-[22px]"><use href="#kebab"/></svg></div>
      </div>
      <div class="flex-1 flex min-h-0">
        <div class="w-[542px] flex flex-col overflow-hidden *:shrink-0">
          <div class="h-[118px] bg-[#303030] flex">
            <div class="w-[92px] pl-[14px] pt-[21px]"><svg class="w-[40px] h-[43px] text-[#949494]"><use href="#cube"/></svg><svg class="ml-[39px] mt-[-2px] w-[15px] h-[9px]"><use href="#down"/></svg></div>
            <div class="flex-1 flex flex-col">
              <div class="mt-[19px] h-[35px] flex items-center">
                <div class="w-7 h-7 rounded bg-[#222] border-2 border-[#1b1b1b] border-t-[#0d0d0d]"></div>
                <div class="ml-3 w-[249px] h-[35px] rounded-md bg-[#222] border-2 border-[#1b1b1b] border-t-[#0d0d0d] flex items-center pl-[4px] pt-px font-medium">CanvasInput</div>
                <div class="ml-2 w-7 h-7 rounded bg-[#222] border-2 border-[#1b1b1b] border-t-[#0d0d0d]"></div>
                <span class="ml-2">Static</span><svg class="ml-[26px] w-[15px] h-[9px]"><use href="#down"/></svg>
              </div>
              <div class="mt-[13px] h-[34px] flex items-center">
                <span class="w-[53px] -ml-[8px]">Tag</span>
                <div class="w-[157px] h-[34px] rounded-md bg-[#424242] border-2 border-[#222] flex items-center justify-between pl-[5px] pr-[9px]"><span>Untagged</span><svg class="w-[15px] h-[9px]"><use href="#down"/></svg></div>
                <span class="ml-7 w-[73px]">Layer</span>
                <div class="w-[138px] h-[34px] rounded-md bg-[#424242] border-2 border-[#222] flex items-center justify-between pl-[5px] pr-[9px]"><span>UI</span><svg class="w-[15px] h-[9px]"><use href="#down"/></svg></div>
              </div>
            </div>
          </div>
          <div data-component="Rect Transform" data-icon="rt"></div>
          <div class="h-[391px] flex flex-col pl-[35px] text-[#6a6a6a]">
            <div class="mt-[10px] w-[498px] h-[34px] rounded-md bg-[#333] border-2 border-[#222] text-[#989898] text-[20px] tracking-[0.3px] flex items-center pl-[7px]">Some values driven by Canvas.</div>
            <div class="mt-[13px] h-[30px] flex items-center pl-[147px]"><span class="w-[119px]">Pos X</span><span class="w-[120px]">Pos Y</span><span>Pos Z</span></div>
            <div class="mt-[3px] flex gap-[5px] pl-[145px]" data-fields="114:213.5,115:379.5,114:0"></div>
            <div class="mt-[4px] h-[30px] flex items-center pl-[147px]"><span class="w-[119px]">Width</span><span>Height</span></div>
            <div class="mt-[3px] flex">
              <div class="flex gap-[5px] pl-[145px]" data-fields="114:427,115:759"></div>
              <div class="ml-[17px] -mt-[4px] h-[38px] w-[102px] rounded border-2 border-[#262626] bg-[#474747] flex text-[#747474]">
                <div class="w-[47px] border-r-2 border-[#2d2d2d] flex items-center justify-center"><svg class="w-5 h-5" viewBox="0 0 20 20"><rect x="1" y="1" width="18" height="18" fill="none" stroke="currentColor" stroke-width="2" stroke-dasharray="4 4"/></svg></div>
                <div class="flex-1 flex items-center justify-center text-[21px] font-['Liberation_Sans',sans-serif]">R</div>
              </div>
            </div>
            <div class="mt-[3px] h-10 flex items-center -ml-[19px] text-[#a8a8a8]"><svg class="w-4 h-[18px] text-[#5a5a5a]"><use href="#right"/></svg><span class="ml-[6px]">Anchors</span></div>
            <div class="h-10 flex items-center pl-[3px]"><span class="w-[144px] text-[#a8a8a8]">Pivot</span><span class="w-[22px]">X</span><div class="flex" data-fields="91:0.5"></div><span class="ml-[6px] w-[21px]">Y</span><div class="flex" data-fields="91:0.5"></div></div>
            <div class="mt-4 h-10 flex items-center pl-[3px]"><span class="w-[149px] text-[#a8a8a8]">Rotation</span><span class="w-[28px]">X</span><div class="flex" data-fields="81:0"></div><span class="ml-[10px] w-[28px]">Y</span><div class="flex" data-fields="81:0"></div><span class="ml-[10px] w-[28px]">Z</span><div class="flex" data-fields="81:0"></div></div>
            <div class="h-10 flex items-center pl-[3px]"><span class="w-[149px] text-[#a8a8a8]">Scale</span><span class="w-[28px]">X</span><div class="flex" data-fields="81:1"></div><span class="ml-[10px] w-[28px]">Y</span><div class="flex" data-fields="81:1"></div><span class="ml-[10px] w-[28px]">Z</span><div class="flex" data-fields="81:1"></div></div>
          </div>
          <div data-component="Canvas" data-icon="canvas"></div>
          <div class="pt-2 pb-[15px]">
            <div data-row="Render Mode" data-drop="Screen Space - Ov"></div>
            <div data-row="Pixel Perfect" data-indent data-check="off"></div>
            <div data-row="Sort Order" data-indent data-field="0"></div>
            <div data-row="Target Display" data-indent data-drop="Display 1"></div>
            <div data-row="Additional Shader Cha" data-drop="Nothing"></div>
          </div>
          <div data-component="Canvas Scaler" data-icon="scaler"></div>
          <div class="pt-2 pb-[16px]">
            <div data-row="UI Scale Mode" data-drop="Constant Pixel Size"></div>
            <div class="h-[15px]"></div>
            <div data-row="Scale Factor" data-field="1"></div>
            <div data-row="Reference Pixels Per " data-field="100"></div>
          </div>
          <div data-component="Graphic Raycaster" data-icon="ray"></div>
          <div class="pt-2">
            <div class="h-10 flex items-center pl-[38px] text-[#6a6a6a]"><span class="w-[242px]">Script</span>
              <div class="w-[253px] h-[35px] rounded-md bg-[#282828] border-2 border-[#212121] flex items-center pl-[6px] pr-2"><svg class="w-5 h-5 shrink-0 opacity-60 text-[#a8a8a8]" viewBox="0 0 28 28"><use href="#rayicon"/></svg><span class="ml-[4px] w-[184px] overflow-hidden leading-[30px]">GraphicRaycaster</span><svg class="ml-auto size-5 shrink-0" viewBox="0 0 20 20"><circle cx="10" cy="10" r="9" fill="none" stroke="currentColor" stroke-width="2"/><circle cx="10" cy="10" r="3" fill="currentColor"/></svg></div>
            </div>
            <div data-row="Ignore Reversed Grap" data-check="on"></div>
            <div data-row="Blocking Objects" data-drop="None"></div>
            <div data-row="Blocking Mask" data-drop="Everything"></div>
          </div>
        </div>
        <div class="flex-1 bg-[#2b2b2b] border-l border-[#242424] flex flex-col items-center pt-3 pb-[10px]">
          <svg class="w-[15px] h-[9px] shrink-0"><use href="#up"/></svg><div class="mt-[13px] w-5 h-[1029px] shrink-0 rounded-full bg-[#4a4a4a]"></div><svg class="mt-auto w-[15px] h-[10px] shrink-0"><use href="#down"/></svg>
        </div>
      </div>
    </section>
  </div>

  <!-- status bar -->
  <div class="flex-1 flex items-center pl-[6px] text-[22px]">
    <svg class="w-[27px] h-[28px]" viewBox="0 0 27 28"><path d="M13 0a13 13 0 1 0 6 24.500l6 3.500-1-7A13 13 0 0 0 13 0z" fill="#c8c8c8"/><path d="M13 4.500v10" stroke="#141414" stroke-width="3.400"/><circle cx="13" cy="19.500" r="2.200" fill="#141414"/></svg><span class="ml-[7px]">0</span>
    <div class="ml-auto mr-[2px] flex self-stretch *:flex *:items-center *:justify-center *:border-l *:border-[#222]">
      <div class="w-[52px]"><svg class="w-[30px] h-[30px]" viewBox="0 0 30 30"><path d="M15 4q7 0 7 13t-7 12q-7 1-7-12T15 4zM10 2l3 3M20 2l-3 3M1 9l7 4M29 9l-7 4M0 18h8M30 18h-8M2 28l6-6M28 28l-6-6" fill="currentColor" stroke="currentColor" stroke-width="2"/><path d="M4 2l26 26" stroke="#141414" stroke-width="2.500"/><path d="M2 3l26 26" stroke="currentColor" stroke-width="2"/></svg></div>
      <div class="w-[53px]"><svg class="w-[28px] h-[29px]" viewBox="0 0 28 29"><ellipse cx="14" cy="5" rx="12" ry="5" fill="currentColor"/><path d="M2 8q12 7 24 0v5q-12 7-24 0zM2 16q12 7 24 0v8q-12 8-24 0z" fill="currentColor"/><path d="M3 0l26 27" stroke="#141414" stroke-width="2.500"/><path d="M1 1l26 27" stroke="currentColor" stroke-width="2"/></svg></div>
      <div class="w-[50px] bg-[#3d3d3d]"><svg class="w-[29px] h-[30px]" viewBox="0 0 29 30"><path d="M2 9Q5 3 11 2M18 2q6 1 9 7M2 21q3 6 9 7M27 21q-3 6-9 7" fill="none" stroke="currentColor" stroke-width="3"/><path d="M14 6q7 0 7 8 0 4-3 6v4h-7v-4q-3-2-3-6 0-8 6-8z" fill="currentColor"/><path d="M3 1l26 27" stroke="#3d3d3d" stroke-width="3"/><path d="M1 2l26 27" stroke="currentColor" stroke-width="2"/></svg></div>
      <div class="w-[51px]"><svg class="w-[29px] h-[29px]" viewBox="0 0 29 29"><circle cx="14.500" cy="14.500" r="13.200" fill="none" stroke="#b0b0b0" stroke-width="2"/><path d="M9 15l4 4 7-8" fill="none" stroke="#b0b0b0" stroke-width="2.600"/></svg></div>
    </div>
  </div>
</main>

<!-- dock -->
<footer class="absolute left-[565px] top-[1458px] w-[1431px] h-[132px] rounded-[34px] border-2 border-white/20 bg-linear-to-r from-[#6f58b8] via-[#8b58ea] via-60% to-[#bb55ec]">
  <svg class="absolute -left-[2px] -top-[2px]" width="1431" height="132" viewBox="565 1458 1431 132">
    <defs>
      <linearGradient id="fb" x1="0" x2="0" y1="0" y2="1"><stop offset="0" stop-color="#1fcbfb"/><stop offset="1" stop-color="#1e6ff2"/></linearGradient>
      <linearGradient id="fw" x1="0" x2="0" y1="0" y2="1"><stop offset="0" stop-color="#f4f3f4"/><stop offset="1" stop-color="#d2dce8"/></linearGradient>
      <linearGradient id="ny" x1="0" x2="0" y1="0" y2="1"><stop offset="0" stop-color="#ffd95a"/><stop offset="1" stop-color="#ffc800"/></linearGradient>
      <linearGradient id="sw" x1="0" x2="0" y1="0" y2="1"><stop offset="0" stop-color="#fff"/><stop offset="1" stop-color="#d4d4d4"/></linearGradient>
      <linearGradient id="sb" x1="0" x2="0" y1="0" y2="1"><stop offset="0" stop-color="#1ea9f2"/><stop offset="1" stop-color="#1d6fe8"/></linearGradient>
      <linearGradient id="tb" x1="0" x2="0" y1="0" y2="1"><stop offset="0" stop-color="#cfe8f2"/><stop offset="1" stop-color="#77706f"/></linearGradient>
      <linearGradient id="tr" x1="0" x2="0" y1="0" y2="1"><stop offset="0" stop-color="#cbc4d4"/><stop offset=".4" stop-color="#cdcacf"/><stop offset=".8" stop-color="#d5d3d8"/><stop offset="1" stop-color="#f4f2f6"/></linearGradient>
      <clipPath id="sq"><rect width="82" height="82" rx="19"/></clipPath>
      <clipPath id="sm"><rect width="31" height="31" rx="7"/></clipPath>
    </defs>
    <!-- Finder -->
    <g transform="translate(584 1478)" clip-path="url(#sq)"><rect width="82" height="82" fill="url(#fb)"/><path d="M45 0Q36 22 35 48h12q-1 18 4 34h31V0z" fill="url(#fw)"/><path d="M22 24v6M60 24v6" stroke="#27323e" stroke-width="4" stroke-linecap="round"/><path d="M17 55q24 20 49 0" fill="none" stroke="#1d2733" stroke-width="3.400" stroke-linecap="round"/></g>
    <!-- Launchpad -->
    <rect x="694" y="1478" width="82" height="82" rx="19" fill="#d0c4ea"/>
    <g id="pads"></g>
    <!-- Notes -->
    <g transform="translate(804 1478)" clip-path="url(#sq)"><rect width="82" height="82" fill="#f1efec"/><rect width="82" height="21" fill="url(#ny)"/><path d="M0 22h82" stroke="#b5a070" stroke-width="1.500"/><path d="M3 25h79" stroke="#b9b5af" stroke-width="2" stroke-dasharray="1.200 1.800"/><path d="M0 41h82M0 62h82" stroke="#d0ced0" stroke-width="1.500"/></g>
    <!-- Safari -->
    <rect x="914" y="1478" width="82" height="82" rx="19" fill="url(#sw)"/><circle cx="955" cy="1519" r="35.500" fill="url(#sb)"/><circle cx="955" cy="1519" r="30" fill="none" stroke="#fff" stroke-opacity=".8" stroke-width="4" stroke-dasharray="1 2.140"/>
    <path d="M981 1498l-21 26-10-10z" fill="#ef3b34"/><path d="M930 1540l20-26 10 10z" fill="#f2f2f2"/>
    <path d="M1037.500 1476v96M1525.500 1476v96" stroke="#4a1ba8" stroke-width="2"/>
    <!-- Terminal -->
    <rect x="1074" y="1478" width="82" height="82" rx="19" fill="url(#tb)"/><rect x="1077" y="1481" width="76" height="76" rx="16" fill="#000"/><rect x="1083" y="1487" width="64" height="64" rx="10" fill="#262626"/><path d="M1089 1494l9 5-9 5" fill="none" stroke="#fff" stroke-width="2.600"/><path d="M1102 1508h12" stroke="#fff" stroke-width="2.600"/>
    <!-- Unity Hub and Unity -->
    <svg x="1183" y="1471.300" width="84" height="94.700" viewBox="-126 -142 252 284" class="[--t:#fff] [--l:#cbcbcb] [--r:#a6a6a6] [--it:#808080] [--il:#4c4c4c] [--ir:#000]"><use href="#hub" x="-126" y="-142" width="252" height="284"/></svg>
    <svg x="1293" y="1471.300" width="84" height="94.700" viewBox="-126 -142 252 284" class="[--t:#808080] [--l:#4c4c4c] [--r:#000] [--it:#fff] [--il:#e8e8e8] [--ir:#d8d8d8]"><use href="#hub" x="-126" y="-142" width="252" height="284"/></svg>
    <!-- VS Code -->
    <rect x="1404" y="1478" width="82" height="82" rx="19" fill="#fff"/>
    <path d="M1416 1529l42-39v17l-34 27q-2 1-3 0l-5-3q-1-1 0-2z" fill="#0065a9"/><path d="M1424 1504l34 26v18l-42-37q-1-1 0-3l5-4q2-1 3 0z" fill="#007acc"/><path d="M1459 1490q1 0 2 1l11 5q1 1 1 3v40q0 2-1 3l-11 5q-3 2-5 0l2-2v-53z" fill="#1f9cf0"/>
    <!-- minimised windows -->
    <rect x="1557" y="1484" width="96" height="78" fill="none"/><rect x="1557" y="1487" width="96" height="75" fill="none"/>
    <rect x="1557" y="1484" width="96" height="70" fill="#fff"/><rect x="1557" y="1484" width="96" height="7" fill="#efeaf1"/><rect x="1557" y="1491" width="30" height="63" fill="#f2f2f2"/><rect x="1559" y="1492" width="28" height="8" fill="#d4d4d4"/>
    <path d="M1562 1494h20M1562 1502.500h21M1562 1511h19M1562 1519h7M1562 1528h20M1562 1536h5M1562 1545h20M1562 1552.500h13" stroke="#777" stroke-width="1.300"/><path d="M1562 1497h11M1562 1505h17M1562 1514h17M1562 1522h20M1562 1531h13M1562 1539h18M1562 1548h18M1591 1498.500h14" stroke="#ccc"/><path d="M1591 1496.500h43" stroke="#f6b73c" stroke-width="2"/><path d="M1612 1492.500h16" stroke="#ccc"/>
    <g transform="translate(1620 1534)" clip-path="url(#sm)"><rect width="31" height="31" fill="#efedea"/><rect width="31" height="8" fill="url(#ny)"/><path d="M0 15.500h31M0 23h31" stroke="#cfcdca"/></g>
    <g id="terms"></g>
    <!-- Trash -->
    <path d="M1899 1498q1-5 36-5 35 0 36 5l-9 58q-1 8-27 8t-27-8z" fill="url(#tr)"/>
    <ellipse cx="1935" cy="1500" rx="35" ry="8" fill="#a78fb8"/>
    <path d="M1904 1498l6-11 10-6 10-8 12 4 8-5 8 9 12 4 1 13-12 8-24 3-22-5z" fill="#e2e2e2"/><path d="M1912 1492l12-8 8 2-6 6zM1942 1480l8-4 4 8-8 4zM1955 1495l8-2 3 6-8 4zM1928 1479l6-3 3 4-6 2z" fill="#8f8f8f"/><path d="M1922 1492l8-6 10 2-6 5z" fill="#4fb6b0"/><path d="M1922 1495l6-5 6 1-4 4z" fill="#5fb84f"/><path d="M1938 1500l4-12 5 2-1 12z" fill="#b3543a"/><path d="M1944 1497l10-8 3 11-10 3z" fill="#3b4a86"/><path d="M1914 1497l10 6-4 5zM1930 1498l6 8h-10z" fill="#3a3a3a"/>
    <path d="M1899 1499l10 58q2 7 26 7t26-7l10-58q-3 7-36 8-33-1-36-8z" fill="url(#tr)"/><path d="M1912 1512l12-5 3 12zM1922 1515q16 6 28-6l-4 12z" fill="#e3e1e6"/>
    <g fill="#16066b"><circle cx="624" cy="1582" r="4"/><circle cx="844" cy="1582" r="4"/><circle cx="954" cy="1582" r="4"/><circle cx="1114" cy="1582" r="4"/><circle cx="1224" cy="1582" r="4"/><circle cx="1334" cy="1582" r="4"/><circle cx="1444" cy="1582" r="4"/></g>
  </svg>
</footer>

<script>
const $ = (s) => document.querySelector(s);
const all = (s, f) => document.querySelectorAll(s).forEach(f);

// hierarchy tree
const cube = '<svg class="w-[27px] h-[28px] shrink-0"><use href="#cube"/></svg>';
const rows = [['Main Camera', 1, ''], ['Canvas', 1, 'down'], ['DICE', 2, 'right'], ['Text (Legacy)', 2, '']];
for (let i = 0; i < 19; i++) rows.push([String(i).padStart(2, '0'), 2, '']);
const arrows = { '': '', down: '<svg class="w-[18px] h-[15px]"><use href="#fold"/></svg>', right: '<svg class="w-[16px] h-[18px]"><use href="#right"/></svg>' };
$('#tree').innerHTML = rows.map(([n, d, a]) => `<div class="h-8 flex items-center shrink-0"><div class="${d === 1 ? 'w-[121px]' : 'w-[149px]'} flex justify-end pr-[7px] text-[#5a5a5a]">${arrows[a]}</div>${cube}<span class="ml-[8px] tracking-[0.1px]">${n}</span></div>`).join('');

// checkerboards
const draw = (id, x0, y0, s, clip) => {
  const edge = (o, i) => Math.round(o + i * s);
  let h = '';
  for (let r = 0; r < 10; r++) for (let c = 0; c < 10; c++) {
    const x = Math.max(edge(x0, c), clip), y = edge(y0, r);
    const f = r === 9 && c === 9 ? '#3fa5b1' : (r + c) % 2 ? '#fff' : '#ba90c2';
    h += `<rect x="${x}" y="${y}" width="${edge(x0, c + 1) - x}" height="${edge(y0, r + 1) - y}" fill="${f}"/>`;
  }
  $(id).innerHTML = h;
};
draw('#board', 762, 506, 35, 0);
draw('#gboard', 1389.3, 522, 42.34, 1392);
let g = '';
for (let i = 0; i < 11; i++) g += `M${516.3 + i * 81.95} 256V1005`;
for (let i = 0; i < 9; i++) g += `M482 ${338 + i * 81.8}H1346`;
$('#gridlines').setAttribute('d', g);

// inspector component headers and rows
const icons = {
  rt: '<path d="M2 4Q6 0 8 3l4 8-8-4Q1 6 2 4zM26 4Q22 0 20 3l-4 8 8-4q3-1 2-3zM2 24q4 4 6 1l4-8-8 4q-3 1-2 3zM26 24q-4 4-6 1l-4-8 8 4q3 1 2 3z" fill="currentColor"/>',
  canvas: '<path d="M3 5h22v18H3z" fill="none" stroke="currentColor" stroke-width="2"/><path d="M7 8.500h14v11H7z" fill="currentColor"/><g fill="currentColor"><circle cx="3" cy="5" r="2.800"/><circle cx="25" cy="5" r="2.800"/><circle cx="3" cy="23" r="2.800"/><circle cx="25" cy="23" r="2.800"/></g>',
  scaler: '<path d="M19 3H2v22h24V10" fill="none" stroke="currentColor" stroke-width="2"/><path d="M5 6h15l3 3v13H13v-8H5zM20 2h7v7z" fill="currentColor"/>',
  ray: '<use href="#rayicon"/>'
};
const tri = '<svg class="w-[15px] h-[9px] shrink-0"><use href="#down"/></svg>';
const box = (on) => `<div class="w-7 h-7 shrink-0 rounded bg-[#222] border-2 border-[#1b1b1b] border-t-[#0d0d0d]">${on ? '<svg class="w-6 h-6"><use href="#check"/></svg>' : ''}</div>`;
all('[data-component]', (e) => {
  const k = e.dataset.icon;
  e.className = 'h-[43px] bg-[#323232] border-t-2 border-b border-t-[#191919] border-b-[#252525] flex items-center pl-[12px] pr-[23px] text-[#b4b4b4]';
  e.innerHTML = `<svg class="w-[18px] h-[15px] text-[#5a5a5a]"><use href="#fold"/></svg><svg class="ml-[12px] w-7 h-7" viewBox="0 0 28 28">${icons[k]}</svg><div class="w-[40px] ml-[10px]">${k === 'rt' ? '' : box(true)}</div><span class="font-semibold mt-px tracking-[0.1px]">${e.dataset.component}</span><div class="ml-auto flex items-center gap-5"><svg class="size-5"><use href="#help"/></svg><svg class="size-5"><use href="#sliders"/></svg></div><svg class="ml-[27px] w-[6px] h-[22px]"><use href="#kebab"/></svg>`;
});
all('[data-fields]', (e) => {
  e.innerHTML = e.dataset.fields.split(',').map((p) => { const [w, t] = p.split(':'); return `<div class="h-[35px] rounded-md bg-[#282828] border-2 border-[#212121] flex items-center pl-[4px]" style="width:${w}px">${t}</div>`; }).join('');
});
all('[data-row]', (e) => {
  const d = e.dataset;
  e.className = 'h-10 flex items-center';
  let c = '';
  if (d.drop) c = `<div class="w-[253px] h-[35px] rounded-md bg-[#424242] border-2 border-[#222] flex items-center justify-between pl-[6px] pr-[9px]"><span class="max-w-[216px] overflow-hidden leading-[30px] -mt-px">${d.drop}</span>${tri}</div>`;
  if (d.field) c = `<div class="w-[253px] h-[35px] rounded-md bg-[#222] border-2 border-[#1b1b1b] border-t-[#0d0d0d] flex items-center pl-[4px]">${d.field}</div>`;
  if (d.check) c = box(d.check === 'on');
  e.innerHTML = `<div class="w-[276px] mr-[4px] overflow-hidden leading-[32px] ${'indent' in d ? 'pl-[68px]' : 'pl-[38px]'}">${d.row}</div>${c}`;
});

// script assets
$('#files').innerHTML = ['FitScreen', 'NewScript'].map((n) => `<div class="w-[152px] flex flex-col items-center"><svg class="w-[96px] h-[112px]" viewBox="0 0 96 112"><path d="M6 0h67l23 23v83q0 6-6 6H6q-6 0-6-6V6Q0 0 6 0z" fill="#c2c2c2"/><path d="M43 24l-9 69M61 24l-9 69M22 44h52M18 68h52" stroke="#1f5623" stroke-width="9"/></svg><span class="mt-[14px]">${n}</span></div>`).join('');

// code minimap
const B = '#4f86a3', G = '#3f6b38', T = '#2f8f78', O = '#9a5f48';
const L = [[378, ');', B], [453, 'up();', B], [485, ' as GameObject);', B], [489, ') as GameObject);', B], [497, 'tileRenderer>();', T], [553, 'emaTile");', O], [561, '") as GameObject);', B], [613, 'form();', B], [621, '= sideLength, topLeftPoint.y);', B], [625, 'x, topLeftPoint.y - sideLength);', B], [629, '.x + sideLength, topLeftPoint.y - sideLength)', B], [637, '.x + bottomLeftPoint.x + bottomRightPoint.x)', B], [641, '.y + bottomLeftPoint.y + bottomRightPoint.y)', B], [649, 'nate, 0f);', B], [665, '-1)', G], [693, 'nate, -1) ;', B], [701, 'nateAll);', B], [733, ' BottomLeftDefault, -1);', G], [817, 'nsform();', B], [821, '= sideLength, topLeftPoint.y);', B], [825, 'x, topLeftPoint.y - sideLength);', B], [829, '.x + sideLength, topLeftPoint.y - sideLength)', B], [833, '.x + bottomLeftPoint.x + bottomRightPoint.x)', B], [837, 'x + bottomLeftPoint.y + bottomRightPoint', B], [845, 'ordinate();', B], [857, 'll, nodeAll);', B], [869, 'ate=1)', G], [1005, 'GameObject();', G], [1009, 'derer>();', T], [1037, 'l);', B], [1081, 'SizeHalf);', G]];
$('#minimap').innerHTML = L.map(([y, t, c]) => `<div class="absolute left-0 whitespace-pre font-bold" style="top:${y - 178}px;color:${c}">${t}</div>`).join('') + [1100, 1112, 1124].map((y) => `<div class="absolute left-0 w-full h-1 bg-[#1f2835]" style="top:${y - 176}px"></div>`).join('');

// launchpad tiles and minimised terminals
const pc = ['#3fdd3c', '#ffc21a', '#ff9416', '#e32017', '#9ba5ad', '#ff3f5f', '#a04fd8', '#16a3f5', '#3cd0a4'];
$('#pads').innerHTML = pc.map((c, i) => `<rect x="${707 + (i % 3) * 20}" y="${1491.500 + Math.floor(i / 3) * 20}" width="16" height="16" rx="4" fill="${c}"/>`).join('');
let th = '';
for (const x of [1664, 1774]) {
  th += `<circle cx="${x + 88}" cy="1556" r="14" fill="#7d3aa8"/><rect x="${x}" y="1487" width="101" height="65" rx="3" fill="#cfe3dc"/><rect x="${x + 1}" y="1488.500" width="99" height="62" rx="2" fill="#0c0c0c"/><rect x="${x + 5}" y="1492" width="91" height="54" fill="#fafafa"/>`;
  for (let i = 0; i < 6; i++) th += `<path d="M${x + 6} ${1495.500 + i * 9}h46M${x + 6} ${1497.500 + i * 9}h51M${x + 6} ${1499.800 + i * 9}h20" stroke="#777" stroke-width="1" stroke-dasharray="3 1"/><path d="M${x + 5} ${1493 + i * 9}h91" stroke="#ddd" stroke-width="1"/>`;
  th += `<g fill="#fff"><rect x="${x + 82}" y="1564" width="3" height="3"/><rect x="${x + 86}" y="1564" width="3" height="3"/><rect x="${x + 90}" y="1564" width="3" height="3"/></g>`;
}
$('#terms').innerHTML = th;
</script>
</body>
</html>
